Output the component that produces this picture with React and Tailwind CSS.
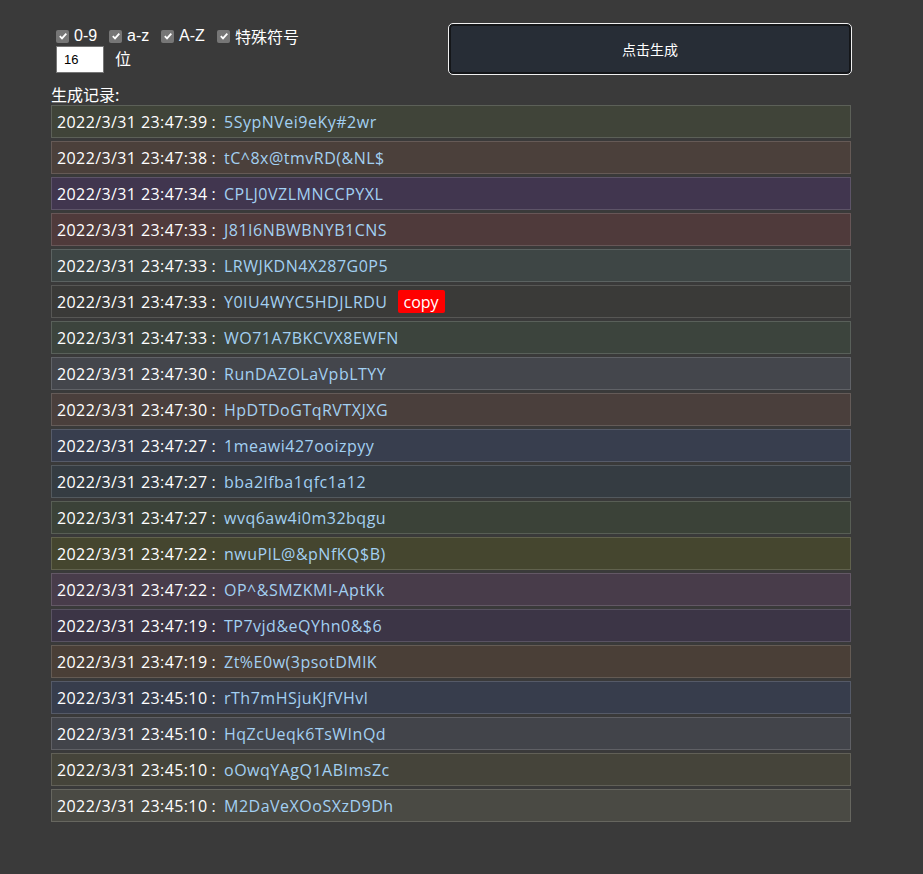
import React from "react";

const rows = [
  ["2022/3/31 23:47:39", "5SypNVei9eKy#2wr", "bg-[#404439]", "border-[#5c6058]"],
  ["2022/3/31 23:47:38", "tC^8x@tmvRD(&NL$", "bg-[#4b403b]", "border-[#655a56]"],
  ["2022/3/31 23:47:34", "CPLJ0VZLMNCCPYXL", "bg-[#41364f]", "border-[#5d5468]"],
  ["2022/3/31 23:47:33", "J81I6NBWBNYB1CNS", "bg-[#4f3a3b]", "border-[#675657]"],
  ["2022/3/31 23:47:33", "LRWJKDN4X287G0P5", "bg-[#3e4645]", "border-[#5b6261]"],
  ["2022/3/31 23:47:33", "Y0IU4WYC5HDJLRDU", "bg-[#3a3a38]", "border-[#575755]", true],
  ["2022/3/31 23:47:33", "WO71A7BKCVX8EWFN", "bg-[#3c443d]", "border-[#59605a]"],
  ["2022/3/31 23:47:30", "RunDAZOLaVpbLTYY", "bg-[#44464c]", "border-[#606267]"],
  ["2022/3/31 23:47:30", "HpDTDoGTqRVTXJXG", "bg-[#4a3f3c]", "border-[#645b58]"],
  ["2022/3/31 23:47:27", "1meawi427ooizpyy", "bg-[#383e4e]", "border-[#565b69]"],
  ["2022/3/31 23:47:27", "bba2lfba1qfc1a12", "bg-[#353c42]", "border-[#53595e]"],
  ["2022/3/31 23:47:27", "wvq6aw4i0m32bqgu", "bg-[#3b4238]", "border-[#585e55]"],
  ["2022/3/31 23:47:22", "nwuPlL@&pNfKQ$B)", "bg-[#45462f]", "border-[#61624d]"],
  ["2022/3/31 23:47:22", "OP^&SMZKMI-AptKk", "bg-[#483c4a]", "border-[#635865]"],
  ["2022/3/31 23:47:19", "TP7vjd&eQYhn0&$6", "bg-[#3c3546]", "border-[#595362]"],
  ["2022/3/31 23:47:19", "Zt%E0w(3psotDMlK", "bg-[#4a3f37]", "border-[#645b54]"],
  ["2022/3/31 23:45:10", "rTh7mHSjuKJfVHvl", "bg-[#373d4c]", "border-[#555a67]"],
  ["2022/3/31 23:45:10", "HqZcUeqk6TsWInQd", "bg-[#42444a]", "border-[#5f6065]"],
  ["2022/3/31 23:45:10", "oOwqYAgQ1ABImsZc", "bg-[#45443a]", "border-[#616057]"],
  ["2022/3/31 23:45:10", "M2DaVeXOoSXzD9Dh", "bg-[#4a4a44]", "border-[#66665f]"],
];

function Check() {
  return (
    <span className="w-[13px] h-[13px] rounded-[2px] bg-[#767676] flex items-center justify-center">
      <svg width="10" height="10" viewBox="0 0 10 10">
        <path d="M1.8 5.2 L4 7.4 L8.3 2.6" fill="none" stroke="#ffffff" strokeWidth="1.8" />
      </svg>
    </span>
  );
}

const sans = "font-['Open_Sans','Noto_Sans_CJK_SC',sans-serif]";
const arial = "font-['Liberation_Sans','Noto_Sans_CJK_SC',sans-serif]";

export default function App() {
  return (
    <div className={`min-h-[874px] bg-[#3a3a3a] text-white ${sans}`}>
      <div className="pt-[23px] pl-[51px] w-[852px]">
        <div className="flex justify-between h-[52px]">
          <div className={`flex flex-col pl-[5px] pt-[3px] ${arial} text-[16px]`}>
            <div className="flex items-center h-[20px]">
              <Check />
              <span className="ml-[5px] mr-[10px] w-[25px]">0-9</span>
              <Check />
              <span className="ml-[5px] mr-[10px] w-[24px]">a-z</span>
              <Check />
              <span className="ml-[5px] mr-[10px] w-[28px]">A-Z</span>
              <Check />
              <span className="ml-[5px] font-['Noto_Sans_CJK_SC',sans-serif]">特殊符号</span>
            </div>
            <div className="flex items-center h-[27px]">
              <div className="w-[48px] h-[27px] bg-white border border-[#767676] text-black text-[13px] flex items-center pl-[7px]">
                16
              </div>
              <span className="ml-[11px] -mt-[4px] font-['Noto_Sans_CJK_SC',sans-serif]">位</span>
            </div>
          </div>
          <button className="w-[404px] h-[52px] rounded-[5px] border border-[#f0f0f0] bg-[#272d36] shadow-[inset_0_0_0_2px_#141619] text-white text-[14px] font-['Noto_Sans_CJK_SC',sans-serif] flex items-center justify-center">
            点击生成
          </button>
        </div>
        <div className="mt-[9px] h-[21px] text-[16px] leading-[20px] font-['Noto_Sans_CJK_SC',sans-serif]">
          生成记录:
        </div>
        <div className="flex flex-col gap-[3px] w-[800px]">
          {rows.map(([t, v, bg, bd, copy], i) => (
            <div key={i} className={`h-[33px] border ${bg} ${bd} flex items-center pl-[5px] text-[16px]`}>
              <span className="w-[167px] whitespace-nowrap tracking-[0.4px]">
                {t}
                <span className="ml-[4px]">:</span>
              </span>
              <span className="text-[#a3d0f2] tracking-[0.5px]">{v}</span>
              {copy && (
                <span className="ml-[10px] bg-[#ff0000] text-white rounded-[2px] px-[6px] h-[23px] flex items-center leading-none">
                  copy
                </span>
              )}
            </div>
          ))}
        </div>
      </div>
    </div>
  );
}
